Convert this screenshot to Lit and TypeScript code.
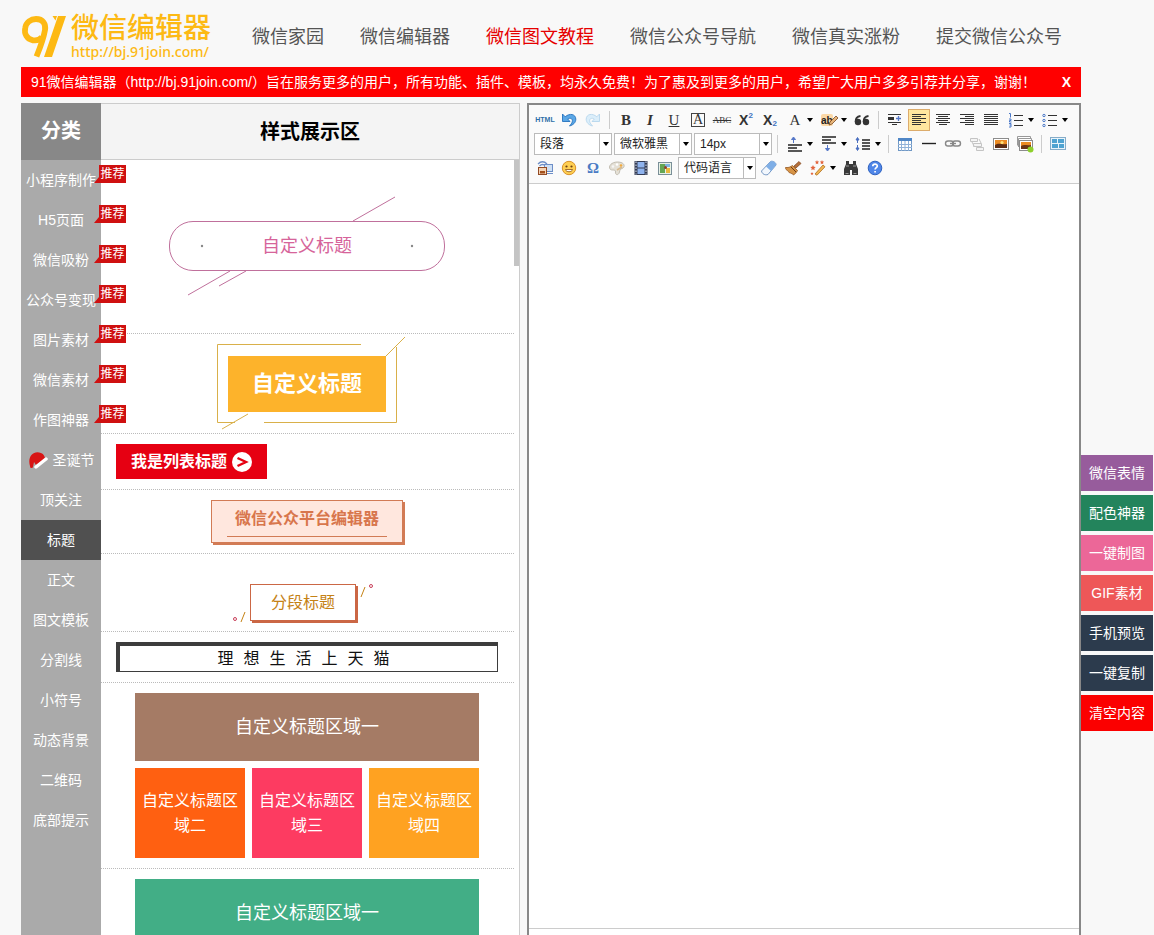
import { LitElement, html, svg, css, TemplateResult } from "lit";
import { customElement } from "lit/decorators.js";
import { classMap } from "lit/directives/class-map.js";
import { styleMap } from "lit/directives/style-map.js";

const lines = (rows: number[][]) =>
  svg`${rows.map(([x1, x2, y]) => svg`<path d="M${x1} ${y}.5H${x2}" stroke="#333" fill="none"/>`)}`;

const icons: Record<string, TemplateResult> = {
  undo: svg`<path d="M3.500 4v7.500H11L8.700 9C11 7.500 14 8.500 13.300 11.500c-.4 1.800-1.500 3-2.800 4.500 3.800-1 6.300-3.500 6.300-6.800C16.800 4 10.500 2.800 6.200 6.800z" fill="#5aa7e6" stroke="#2672bd" stroke-width=".9"/>`,
  redo: svg`<path d="M16.500 4v7.500H9L11.300 9C9 7.500 6 8.500 6.700 11.500c.4 1.800 1.500 3 2.800 4.500-3.800-1-6.300-3.500-6.300-6.800C3.200 4 9.500 2.800 13.800 6.800z" fill="#dbeefa" stroke="#b5d6ec" stroke-width=".9"/>`,
  quote: svg`<g fill="#333"><circle cx="6" cy="12" r="3.200"/><circle cx="14" cy="12" r="3.200"/></g><path d="M3.600 12C3.400 8.500 5 6.500 8.500 6M11.600 12c-.2-3.500 1.400-5.500 4.900-6" stroke="#333" stroke-width="1.800" fill="none"/>`,
  highlight: svg`<rect x="2" y="4" width="12" height="12" rx="2" fill="#fbd9a8"/><text x="2" y="14" class="ab">ab</text><path d="m10 15 1-3 6-6 2 2-6 6z" fill="#e8b67a" stroke="#7a4a24" stroke-width=".8"/>`,
  indent: svg`${lines([[3, 16, 4], [3, 9, 7], [3, 9, 9], [3, 16, 12], [7, 12, 14]])}<path d="M3 7h6v3H3z" fill="#333"/><path d="M11 8.500h5M13.500 6v5" stroke="#5577c8" stroke-width="1.300"/>`,
  left: lines([[3, 17, 4], [3, 12, 6], [3, 17, 8], [3, 12, 10], [3, 17, 12], [3, 12, 14]]),
  center: lines([[3, 17, 4], [5, 15, 6], [3, 17, 8], [5, 15, 10], [3, 17, 12], [6, 14, 14]]),
  right: lines([[3, 17, 4], [8, 17, 6], [3, 17, 8], [8, 17, 10], [3, 17, 12], [8, 17, 14]]),
  justify: lines([[3, 17, 4], [3, 17, 6], [3, 17, 8], [3, 17, 10], [3, 17, 12], [3, 17, 14]]),
  ol: svg`${lines([[8, 17, 5], [8, 17, 10], [8, 17, 15]])}<path d="M3 3.500h1.500v4M3 9h2v1.500H3.500V12H5.500M3 13.500h2V17H3M3.500 15H5" stroke="#4a78c8" fill="none"/>`,
  ul: svg`${lines([[8, 17, 5], [8, 17, 10], [8, 17, 15]])}<g fill="none" stroke="#4a78c8"><circle cx="4" cy="5.500" r="1.200"/><circle cx="4" cy="10.500" r="1.200"/><circle cx="4" cy="15.500" r="1.200"/></g>`,
  spaceTop: svg`<path d="M3 11h14M3 14h9M3 17h14" stroke="#222" stroke-width="1.400"/><path d="M8.500 9V4M6.500 5.500 8.500 3l2 2.500z" stroke="#5577c8" fill="#5577c8"/>`,
  spaceBottom: svg`<path d="M3 3h14M3 6h9M3 9h14" stroke="#222" stroke-width="1.400"/><path d="M8.500 11v5M6.500 14.500l2 2.500 2-2.500z" stroke="#5577c8" fill="#5577c8"/>`,
  lineHeight: svg`<path d="M9 6h8M9 9h8M9 12h8M9 15h8" stroke="#222" stroke-width="1.300"/><path d="M4.500 9V4M3 6l1.500-2.500L6 6zM4.500 11v5M3 14l1.500 2.500L6 14z" stroke="#4a6fc0" fill="#4a6fc0"/>`,
  table: svg`<rect x="3.500" y="4.500" width="13" height="12" fill="#fff" stroke="#6f97c4"/><path d="M3 4h14v3H3z" fill="#4f86c6"/><path d="M3 10.500h14M3 13.500h14M6.500 7v10M10 7v10M13.500 7v10" stroke="#8fb1d8"/>`,
  hr: svg`<path d="M3 9.500h14" stroke="#222" stroke-width="1.400"/>`,
  link: svg`<g fill="none" stroke="#888" stroke-width="1.400"><rect x="2.500" y="7" width="8" height="5" rx="2.500"/><rect x="9.500" y="7" width="8" height="5" rx="2.500"/><path d="M7 9.500h6"/></g>`,
  unlink: svg`<g fill="#f4f4f4" stroke="#c4c4c4"><path d="M3.500 4.500h7v3h-7zM6.500 9.500h8v3h-8zM9.500 13.500h7v3h-7zM12 5l2 4M5 8l2 4"/></g>`,
  image: svg`<rect x="2.500" y="4.500" width="15" height="11" fill="#fff" stroke="#8c8c8c"/><path d="M4 6h12v8H4z" fill="#eb8b22"/><path d="M4 11c4-3 6 0 12-1v4H4z" fill="#5b2c14"/><circle cx="11" cy="8.500" r="1.600" fill="#ffe27a"/>`,
  images: svg`<path d="M2.500 11.500v-9h13V4" fill="#fff" stroke="#999"/><path d="M3.500 13V4.500h13V6" fill="#fff" stroke="#999"/><rect x="4.500" y="6.500" width="13" height="10" fill="#fff" stroke="#8c8c8c"/><path d="M6 8h10v7H6z" fill="#eb8b22"/><path d="M6 12c3-2 6 0 10-1v4H6z" fill="#6b3415"/><circle cx="15.500" cy="15.500" r="3" fill="#8ed02c"/>`,
  template: svg`<rect x="2.500" y="3.500" width="15" height="12" fill="#e9f4fb" stroke="#86acc8"/><path d="M4 5h5v4H4zM10 5h6v4h-6zM4 10h6v4H4zM11 10h5v4h-5z" fill="#4fa3d1"/>`,
  remote: svg`<path d="M3 6c3-3 6-3 9 0M4.500 8c2-2 4-2 6 0" stroke="#6d8ec7" stroke-width="1.300" fill="none"/><rect x="9.500" y="6.500" width="8" height="7" fill="#cfe0f4" stroke="#6d8ec7"/><path d="M12 15.500h6" stroke="#6d8ec7"/><rect x="3.500" y="9.500" width="8" height="7" fill="#f3d3b5" stroke="#934a24"/><path d="M5 13h5v2.500H5z" fill="#a4501c"/>`,
  smile: svg`<circle cx="10" cy="10" r="6.700" fill="#ffcf52" stroke="#d9922a"/><circle cx="7.500" cy="8.500" r="1.100" fill="#6d3f12"/><circle cx="12.500" cy="8.500" r="1.100" fill="#6d3f12"/><path d="M6.500 11.500h7c-.5 3-6.500 3-7 0z" fill="#fff" stroke="#8a5013" stroke-width=".8"/>`,
  palette: svg`<path d="M2.500 9C3 5 9 3 14 4.500c4 1.200 4 5 1 6-2.500.8-2 2-2.500 3.500C11.500 18 8 17 8.500 14c.3-2-1-2-3-2s-3-1-3-3z" fill="#e4e0d6" stroke="#c2bdb1"/><circle cx="6" cy="8.500" r="1.200" fill="#f6f6f6"/><circle cx="10" cy="6.500" r="1.200" fill="#fff"/><circle cx="14" cy="7.500" r="1.300" fill="#f3a93c"/><path d="m10 12 5-3" stroke="#d8b98a" stroke-width="1.500"/>`,
  film: svg`<path d="M3.500 3h13v14h-13z" fill="#343c55"/><path d="M6.500 4h7v5.500h-7zM6.500 10.500h7V16h-7z" fill="#8fb3ee"/><path d="M5 3.500v13M15 3.500v13" stroke="#dfe5f5" stroke-dasharray="1.500 1.500"/>`,
  map: svg`<rect x="3.500" y="4.500" width="13" height="12" fill="#e8f1e6" stroke="#7a8f98"/><path d="M5 6h5v9H5z" fill="#65a653"/><path d="M10 6h5v3h-5z" fill="#7eb4de"/><path d="M11 10h4v5h-4z" fill="#e9b83e"/><circle cx="10.500" cy="9.500" r="1.500" fill="#8f3f2f"/>`,
  eraser: svg`<path d="m2.500 13 9-9.500c2-1 6 1 5.500 3.500l-8 9.500c-3 1-6-.5-6.500-3.500z" fill="#f2f7fd" stroke="#7698c4"/><path d="m7 8.500 4.500-5c2-1 6 1 5.500 3.500l-5 6z" fill="#7eaee6"/>`,
  brush: svg`<path d="m11 8 5-4.500 2 2L13 10z" fill="#b5703a" stroke="#7d421b" stroke-width=".7"/><path d="M2.500 9.500c4 .5 5-1 7-2l5 5c-1 2-2 3-4 4.500-1-2-2-1-3-2-2 0-2-2-3-2.500-1-.5-2-1-2-3z" fill="#d79445" stroke="#93551f" stroke-width=".8"/><path d="m8 9 5 5" stroke="#6b3b18"/>`,
  wand: svg`<path d="m7 16 8-9 2 1.800-8 8.400z" fill="#f1b551" stroke="#b06f21" stroke-width=".8"/><g fill="#e2633c"><path d="m5 7 .8 1.700 1.900.3-1.400 1.300.3 1.900L5 11.300l-1.600.9.3-1.900L2.300 9l1.900-.3zM9 2l.6 1.400 1.500.2L10 4.700l.3 1.500L9 5.500l-1.300.7.3-1.500-1.100-1.100 1.500-.2zM14 2l.6 1.400 1.500.2L15 4.700l.3 1.500-1.300-.7-1.300.7.3-1.500-1.100-1.100 1.500-.2zM4 14l.5 1 1 .2-.7.8.1 1L4 16.500 3.100 17l.1-1-.7-.8 1-.2z"/></g>`,
  find: svg`<path d="M5 3h3v3h4V3h3v3l2 5v6h-6v-5H9v5H3v-6l2-5z" fill="#3a3a3a"/><path d="M5 8h3M12 8h3M4.500 15.500h3M12.500 15.500h3" stroke="#999"/>`,
  help: svg`<circle cx="10" cy="10" r="6.800" fill="#4f86e8" stroke="#2f62bf"/><path d="M7.800 8.300c0-3 4.600-2.800 4.500-.3 0 1.700-2.200 1.700-2.200 3.600M10.100 13v1.600" stroke="#fff" stroke-width="1.700" fill="none"/>`,
};

const glyphs: Record<string, TemplateResult> = {
  html: html`<span class="g tag">HTML</span>`,
  bold: html`<span class="g b">B</span>`,
  italic: html`<span class="g i">I</span>`,
  underline: html`<span class="g u">U</span>`,
  box: html`<span class="g box">A</span>`,
  strike: html`<span class="g strike">ABC</span>`,
  sup: html`<span class="g x">X<sup>2</sup></span>`,
  sub: html`<span class="g x">X<sub>2</sub></span>`,
  color: html`<span class="g a">A</span>`,
  omega: html`<span class="g omega">Ω</span>`,
};

/* A trailing "+" marks a drop-down button, "|" a separator, "=" a select box. */
const toolbar: string[][] = [
  ["html", "undo", "redo", "|", "bold", "italic", "underline", "box", "strike", "sup", "sub", "color+", "highlight+", "quote", "|",
    "indent", "left", "center", "right", "justify", "ol+", "ul+"],
  ["=段落", "=微软雅黑", "=14px", "|", "spaceTop+", "spaceBottom+", "lineHeight+", "|", "table", "hr", "link", "unlink", "image", "images", "|", "template"],
  ["remote", "smile", "omega", "palette", "film", "map", "=代码语言", "eraser", "brush", "wand+", "find", "help"],
];

@customElement("editor-toolbar")
export class EditorToolbar extends LitElement {
  static styles = css`
    :host { display: block; padding: 3px 4px; background: #fafafa; border-bottom: 1px solid #ccc; }
    .row { display: flex; height: 24px; align-items: center; }
    button { display: flex; align-items: center; justify-content: center; height: 22px; width: 22px; margin: 0 1px; padding: 0;
      flex: none; border: 1px solid transparent; background: none; color: #333; }
    button.drop { width: 32px; gap: 2px; }
    button.on { background: #ffe69f; border-color: #dcac6c; }
    svg { width: 20px; height: 20px; flex: none; }
    .caret { border: 3px solid transparent; border-top: 4px solid #000; border-bottom: 0; }
    .sep { width: 1px; height: 18px; margin: 0 4px; background: #ccc; flex: none; }
    .pick { position: relative; flex: none; width: 78px; height: 22px; margin: 0 1px; }
    select { appearance: none; width: 100%; height: 100%; padding: 0 5px; border: 1px solid #bbb; border-radius: 0;
      background: #fff; color: #222; font: 12px "Liberation Sans", "Noto Sans CJK SC", sans-serif; }
    .pick .knob { position: absolute; right: 0; top: 0; width: 12px; height: 22px; border-left: 1px solid #bbb;
      display: grid; place-items: center; pointer-events: none; }
    .g { font: 15px/20px "Liberation Serif", serif; width: 20px; text-align: center; flex: none; }
    .tag { font: bold 7px/20px "Liberation Sans", sans-serif; color: #2f6fa8; }
    .b { font-weight: bold; }
    .i { font-style: italic; font-weight: bold; }
    .u { text-decoration: underline; }
    .box { width: 12px; height: 12px; line-height: 12px; font-size: 14px; border: 1px solid #444; }
    .strike { font-size: 9px; text-decoration: line-through; }
    .x { display: flex; justify-content: center; font: bold 14px/20px "Liberation Sans", sans-serif; }
    sup, sub { font-size: 8px; line-height: 12px; color: #3d73c0; }
    sub { align-self: flex-end; }
    sup { align-self: flex-start; }
    .omega { font-weight: bold; color: #4a7bc4; }
    .ab { font: bold 10px "Liberation Sans", sans-serif; fill: #222; }
  `;

  private item(id: string) {
    if (id === "|") return html`<span class="sep"></span>`;
    if (id[0] === "=") {
      const name = id.slice(1);
      return html`<span class="pick"><select aria-label=${name}><option>${name}</option></select><span class="knob"><i class="caret"></i></span></span>`;
    }
    const drop = id.endsWith("+");
    const name = drop ? id.slice(0, -1) : id;
    return html`<button type="button" aria-label=${name} class=${classMap({ drop, on: name === "left" })}>
      ${glyphs[name] ?? html`<svg viewBox="0 0 20 20">${icons[name]}</svg>`}${drop ? html`<i class="caret"></i>` : ""}
    </button>`;
  }

  render() {
    return toolbar.map((row) => html`<div class="row">${row.map((id) => this.item(id))}</div>`);
  }
}

@customElement("style-gallery")
export class StyleGallery extends LitElement {
  static styles = css`
    :host { display: block; height: 100%; overflow: hidden; }
    .item { display: flow-root; margin-right: 5px; padding: 10px 16px 10px 15px; border-bottom: 1px dotted #bbb; }
    svg { position: absolute; left: 0; top: 0; overflow: visible; pointer-events: none; fill: none; }
    .pill { position: relative; box-sizing: border-box; width: 276px; margin: 51px auto 52px; border: 1px solid #c0709c; border-radius: 24px;
      font-size: 18px; line-height: 48px; text-align: center; color: #d6649a; }
    .frame { position: relative; width: 180px; margin: 0 auto; padding: 12px 0 11px; }
    .gold { width: 158px; margin: 0 auto; background: #fdb32b; color: #fff; font-size: 22px; font-weight: bold; line-height: 56px; text-align: center; }
    .list { display: inline-flex; align-items: center; gap: 5px; height: 35px; padding: 0 15px; background: #e60012; color: #fff; font-size: 16px; font-weight: bold; vertical-align: top; }
    .list svg { position: static; width: 20px; height: 20px; }
    .card { box-sizing: border-box; width: 192px; height: 43px; margin: 0 auto; padding: 0 15px; border: 1px solid #d27b55; box-shadow: 2px 2px #d27b55;
      background: #ffe7de; color: #d8764c; font-size: 16px; font-weight: bold; text-align: center; }
    .card span { display: block; line-height: 35px; border-bottom: 1px solid #d27b55; }
    .segment { padding-right: 24px; }
    .para { position: relative; box-sizing: border-box; width: 106px; margin: 20px auto 0; border: 1px solid #cb6745; box-shadow: 2px 2px #cb6745;
      color: #c58215; font-size: 16px; line-height: 35px; text-align: center; }
    .cat { display: flex; justify-content: center; gap: 10px; padding-right: 10px; border: 1px solid #3d3d3d; border-top-width: 4px; border-left-width: 4px;
      color: #111; font-size: 16px; line-height: 25px; }
    .tiles { display: grid; grid-template-columns: repeat(3, 1fr); gap: 7px; width: 90%; margin: 0 auto; text-align: center; color: #fff; font-size: 16px; line-height: 25px; }
    .wide { grid-column: 1 / -1; font-size: 18px; line-height: 68px; }
    .tile { padding: 20px 5px; }
    .brown { background: #a57b65; } .orange { background: #ff6011; } .pink { background: #fd3b61; }
    .amber { background: #ffa221; } .green { background: #42ae86; }
  `;

  render() {
    return html`
      <div class="item"><div class="pill">自定义标题
        <svg width="274" height="48"><path d="M183-1 225-25M60 49 18 73M76 49 49 64" stroke="#c0709c"/><g fill="#888"><circle cx="32" cy="24" r="1.200"/><circle cx="242" cy="24" r="1.200"/></g></svg>
      </div></div>
      <div class="item"><div class="frame">
        <svg width="180" height="79"><path d="M144 .5H.5V78.500H18M47 78.500H179.500V3M168 13 188-7M5 85 31 70" stroke="#d9b04a"/></svg>
        <div class="gold">自定义标题</div>
      </div></div>
      <div class="item"><div class="list">我是列表标题<svg viewBox="0 0 20 20"><circle cx="10" cy="10" r="10" fill="#fff"/><path d="m5.500 6 8.500 4-8.500 4" stroke="#e60012" stroke-width="2.400"/></svg></div></div>
      <div class="item"><div class="card"><span>微信公众平台编辑器</span></div></div>
      <div class="item segment"><div class="para">分段标题
        <svg width="104" height="35"><path d="m110 12 4-10M-10 37l4-10" stroke="#c58215"/><g stroke="#c9405a"><circle cx="120" cy="1" r="1.500"/><circle cx="-16" cy="34" r="1.500"/></g></svg>
      </div></div>
      <div class="item"><div class="cat">${[..."理想生活上天猫"].map((c) => html`<span>${c}</span>`)}</div></div>
      <div class="item"><div class="tiles">
        <div class="wide brown">自定义标题区域一</div>
        <div class="tile orange">自定义标题区域二</div><div class="tile pink">自定义标题区域三</div><div class="tile amber">自定义标题区域四</div>
      </div></div>
      <div class="item"><div class="tiles"><div class="wide green">自定义标题区域一</div></div></div>
    `;
  }
}

const nav = ["微信家园", "微信编辑器", "微信图文教程", "微信公众号导航", "微信真实涨粉", "提交微信公众号"];
const hot = ["小程序制作", "H5页面", "微信吸粉", "公众号变现", "图片素材", "微信素材", "作图神器"];
const plain = ["圣诞节", "顶关注", "标题", "正文", "图文模板", "分割线", "小符号", "动态背景", "二维码", "底部提示"];
const tools = [
  ["微信表情", "#975c9c"], ["配色神器", "#23845c"], ["一键制图", "#ec6798"], ["GIF素材", "#ee5758"],
  ["手机预览", "#2c3b4d"], ["一键复制", "#2c3b4d"], ["清空内容", "#fb0000"],
];

@customElement("app-root")
export class AppRoot extends LitElement {
  static styles = css`
    :host { display: grid; grid-template-columns: minmax(0, 1fr) 72px; box-sizing: border-box; height: 100vh; padding: 0 1px 0 21px; overflow: hidden;
      background: #f8f8f8; font: 14px/20px "Liberation Sans", "Noto Sans CJK SC", sans-serif; }
    a { color: inherit; text-decoration: none; }
    .page { display: flex; flex-direction: column; min-height: 0; height: 100vh; }
    header { display: flex; align-items: center; flex: none; height: 67px; gap: 41px; }
    .logo { display: flex; gap: 5px; align-items: center; color: #fdb913; padding-top: 5px; flex: none; }
    .logo svg { width: 45px; height: 44px; }
    .name { display: block; font-size: 28px; font-weight: 500; line-height: 30px; width: 140px; }
    .url { display: block; font: 500 14px/15px "Noto Sans", sans-serif; white-space: nowrap; }
    nav { display: flex; gap: 36px; font-size: 18px; line-height: 24px; color: #555; white-space: nowrap; padding-top: 7px; }
    nav .hot { color: #e60000; }
    .notice { display: flex; justify-content: space-between; align-items: center; flex: none; height: 30px; padding: 0 10px; background: #f00; color: #fff; white-space: nowrap; }
    .notice button { border: 0; padding: 0; background: none; color: #fff; font: bold 14px "Liberation Sans", sans-serif; }
    main { display: grid; grid-template-columns: 499px minmax(0, 1fr); gap: 7px; flex: 1; min-height: 0; margin-top: 6px; }
    .left { display: grid; grid-template-columns: 80px minmax(0, 1fr); grid-template-rows: 57px minmax(0, 1fr); min-height: 0; }
    h2 { margin: 0; font-size: 20px; line-height: 57px; text-align: center; }
    .cat { background: #888; color: #fff; }
    .zone { box-sizing: border-box; line-height: 56px; background: #f4f4f4; border: 1px solid #ccc; border-left: 0; color: #000; }
    .side { background: #aaa; color: #fff; }
    .side a { position: relative; z-index: 1; display: flex; align-items: center; justify-content: center; height: 40px; gap: 5px; white-space: nowrap; }
    .side .on { background: #505050; }
    .side svg { width: 20px; height: 18px; }
    .badge { position: absolute; left: 73px; top: 5px; width: 27px; padding-left: 5px; background: #cf1010; font-size: 12px; line-height: 18px; text-align: center;
      clip-path: polygon(5px 0, 100% 0, 100% 100%, 0 100%, 5px 12px); }
    .list { position: relative; min-height: 0; background: #fff; border-right: 1px solid #ccc; overflow: hidden; }
    .thumb { position: absolute; right: 0; top: 0; width: 5px; height: 106px; background: #c4c4c4; }
    .editor { display: flex; flex-direction: column; min-height: 0; border: 2px solid #888; border-bottom: 0; background: #fff; }
    textarea { flex: 1; width: 100%; box-sizing: border-box; padding: 8px; border: 0; resize: none; outline: 0; }
    .status { flex: none; height: 6px; border-top: 1px solid #ccc; }
    aside { display: flex; flex-direction: column; gap: 4px; margin-top: 455px; }
    aside button { height: 36px; padding: 0; border: 0; color: #fff; font: inherit; }
  `;

  render() {
    return html`
      <div class="page">
        <header>
          <a class="logo" href="#">
            <svg viewBox="0 0 45 44" fill="none" stroke="#fdb913"><path d="M21 23C18.500 26 15 26.800 12 26.300 6 25 3 20 4.200 14 5.200 8 10 5 15 5c7 0 10 5 9 11-1 6-3 13-8.500 26.500" stroke-width="5.800"/><path d="M37 2h8L31 43h-8zM31.500 2H36l-1.500 4.500z" fill="#fdb913" stroke="none"/></svg>
            <span><span class="name">微信编辑器</span><span class="url">http://bj.91join.com/</span></span>
          </a>
          <nav>${nav.map((n, i) => html`<a href="#" class=${classMap({ hot: i === 2 })}>${n}</a>`)}</nav>
        </header>
        <div class="notice">
          <span>91微信编辑器（http://bj.91join.com/）旨在服务更多的用户，所有功能、插件、模板，均永久免费！为了惠及到更多的用户，希望广大用户多多引荐并分享，谢谢！</span>
          <button type="button">X</button>
        </div>
        <main>
          <section class="left">
            <h2 class="cat">分类</h2>
            <h2 class="zone">样式展示区</h2>
            <div class="side">
              ${hot.map((n) => html`<a href="#">${n}<span class="badge">推荐</span></a>`)}
              ${plain.map((n, i) => html`<a href="#" class=${classMap({ on: n === "标题" })}>${i ? "" : html`<svg viewBox="0 0 20 18"><path d="M2 15C-1 5 6-1 13 2c3 1 4 4 4 6L8 14l-2-3-1 5z" fill="#d81414"/><path d="m8 16 10-8" stroke="#fff" stroke-width="3.500" stroke-linecap="round"/><circle cx="3.500" cy="15.500" r="1.500" fill="#d81414"/></svg>`}${n}</a>`)}
            </div>
            <div class="list"><style-gallery></style-gallery><span class="thumb"></span></div>
          </section>
          <section class="editor">
            <editor-toolbar></editor-toolbar>
            <textarea aria-label="正文内容"></textarea>
            <div class="status"></div>
          </section>
        </main>
      </div>
      <aside>${tools.map(([n, background]) => html`<button type="button" style=${styleMap({ background })}>${n}</button>`)}</aside>
    `;
  }
}
